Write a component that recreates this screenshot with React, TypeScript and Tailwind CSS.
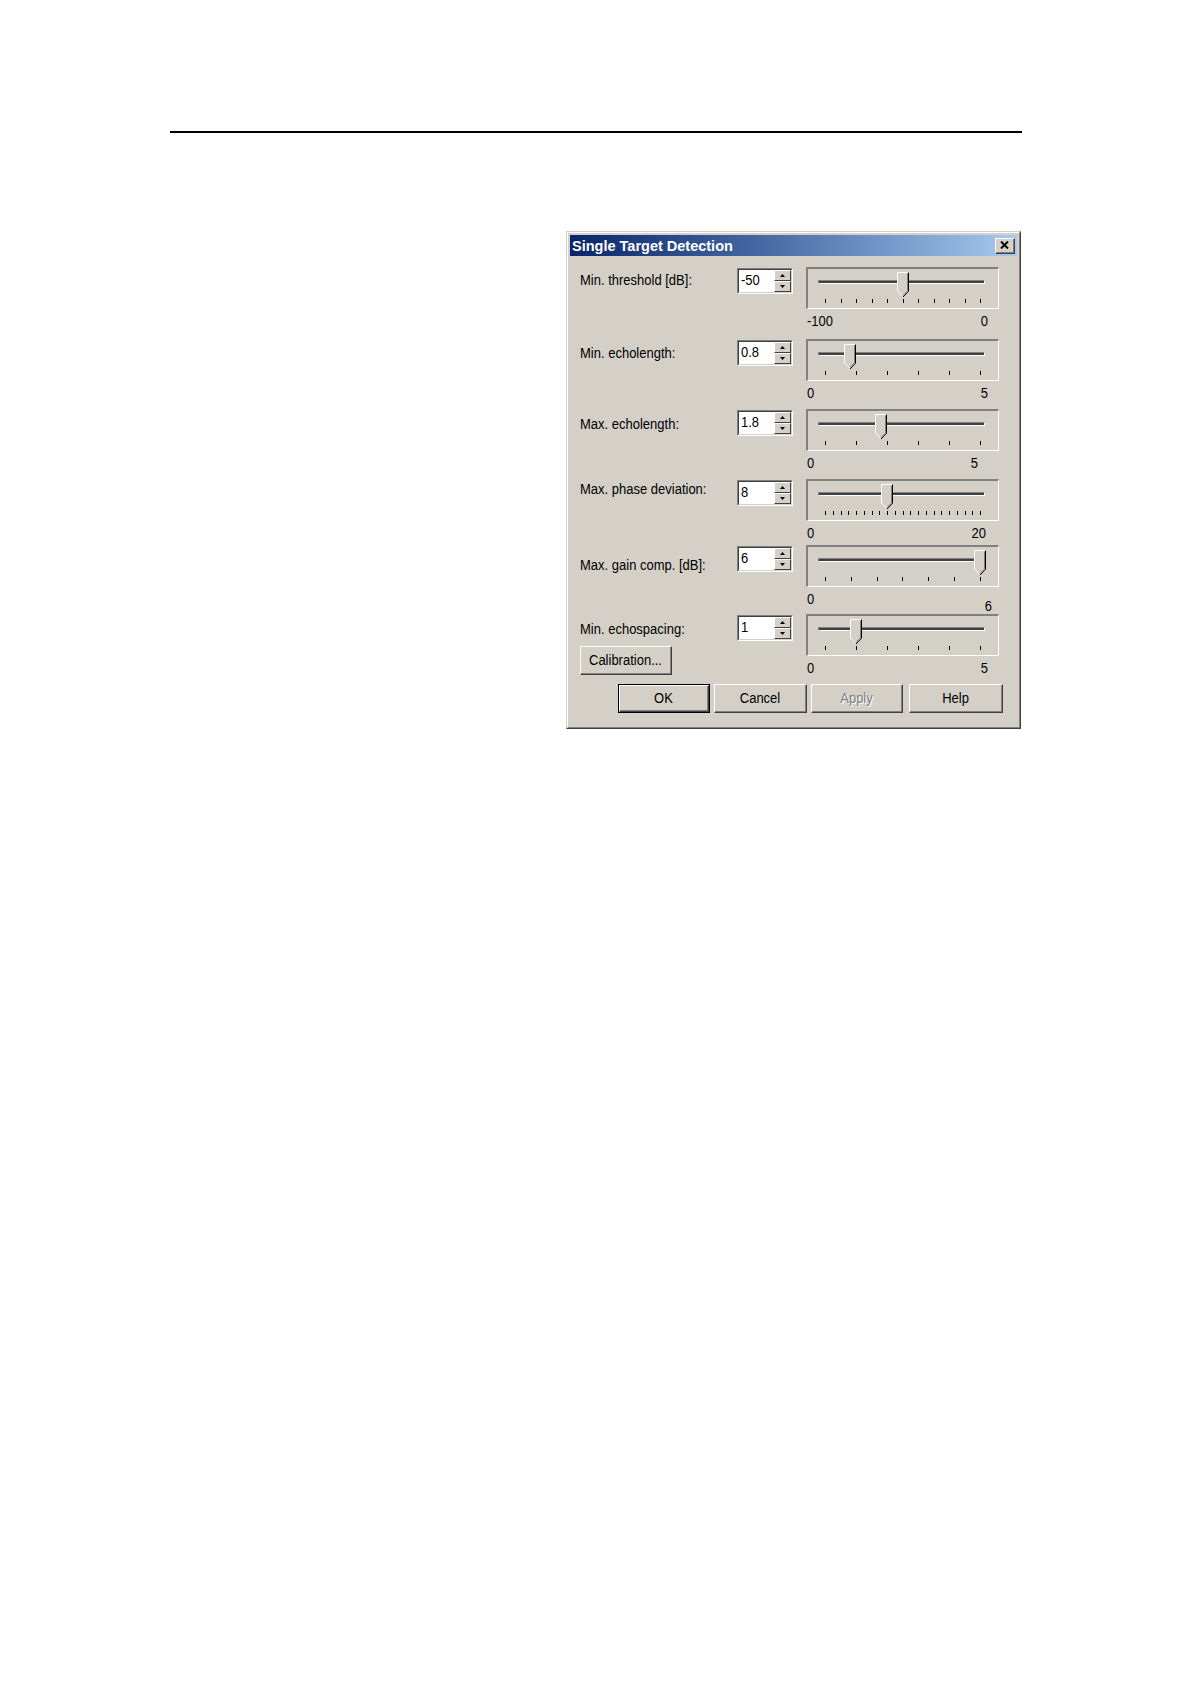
import React from "react";

type Row = {
  label: string;
  value: string;
  min: number;
  max: number;
  v: number;
  ticks: number;
  minL: string;
  maxL: string;
  h: string;
  lp: string;
  rp: string;
  maxMt: string;
  calib?: boolean;
};

const rows: Row[] = [
  { label: "Min. threshold [dB]:", value: "-50", min: -100, max: 0, v: -50, ticks: 11, minL: "-100", maxL: "0", h: "h-[72px]", lp: "pt-[3px]", rp: "pr-[11px]", maxMt: "" },
  { label: "Min. echolength:", value: "0.8", min: 0, max: 5, v: 0.8, ticks: 6, minL: "0", maxL: "5", h: "h-[70px]", lp: "pt-[4px]", rp: "pr-[11px]", maxMt: "" },
  { label: "Max. echolength:", value: "1.8", min: 0, max: 5, v: 1.8, ticks: 6, minL: "0", maxL: "5", h: "h-[70px]", lp: "pt-[5px]", rp: "pr-[21px]", maxMt: "" },
  { label: "Max. phase deviation:", value: "8", min: 0, max: 20, v: 8, ticks: 21, minL: "0", maxL: "20", h: "h-[66px]", lp: "pt-[0px]", rp: "pr-[13px]", maxMt: "" },
  { label: "Max. gain comp. [dB]:", value: "6", min: 0, max: 6, v: 6, ticks: 7, minL: "0", maxL: "6", h: "h-[69px]", lp: "pt-[10px]", rp: "pr-[7px]", maxMt: "mt-[7px]" },
  { label: "Min. echospacing:", value: "1", min: 0, max: 5, v: 1, ticks: 6, minL: "0", maxL: "5", h: "h-[70px]", lp: "pt-[5px]", rp: "pr-[11px]", maxMt: "", calib: true },
];

function Tx({ children, className = "" }: { children: React.ReactNode; className?: string }) {
  return <span className={"inline-block scale-y-[1.18] leading-[14px] " + className}>{children}</span>;
}

function Thumb() {
  return (
    <svg width="13" height="26" viewBox="0 0 13 26">
      <polygon points="0,0 12,0 12,19 6,25 0,19" fill="#d4d0c8" />
      <polyline points="6,24.5 0.5,19 0.5,0.5 11.5,0.5" fill="none" stroke="#ffffff" strokeWidth="1" />
      <polyline points="11.5,0.5 11.5,19.2 6,25" fill="none" stroke="#000000" strokeWidth="1" />
      <polyline points="10.5,1.5 10.5,18.8 6,23.5" fill="none" stroke="#808080" strokeWidth="1" />
    </svg>
  );
}

function Slider({ r }: { r: Row }) {
  const frac = (r.v - r.min) / (r.max - r.min);
  const center = 17 + frac * 155;
  const ticks = Array.from({ length: r.ticks }, (_, i) => i);
  return (
    <div className="w-[193px] flex flex-col">
      <div className="relative h-[42px] border-t-2 border-l-2 border-b border-r border-t-[#808080] border-l-[#808080] border-b-white border-r-white">
        <div className="ml-[10px] mt-[11px] w-[167px] h-[4px] border border-t-[#808080] border-l-[#808080] border-b-white border-r-white bg-[#404040]"></div>
        <div className="ml-[17px] mt-[15px] w-[156px] h-[4px] flex justify-between">
          {ticks.map((i) => (
            <div key={i} className="w-px h-[4px] bg-black" />
          ))}
        </div>
        <div className="absolute top-[3px] leading-[0]" style={{ left: center - 6 }}>
          <Thumb />
        </div>
      </div>
      <div className={"mt-[5px] h-[14px] flex justify-between pl-[1px] " + r.rp}>
        <Tx>{r.minL}</Tx>
        <Tx className={r.maxMt}>{r.maxL}</Tx>
      </div>
    </div>
  );
}

function SpinBtn({ up }: { up?: boolean }) {
  return (
    <div className="h-[11px] bg-[#d4d0c8] border border-t-white border-l-white border-b-[#404040] border-r-[#404040] flex items-center justify-center">
      <svg width="5" height="3" viewBox="0 0 5 3">
        {up ? <polygon points="2.5,0 5,3 0,3" fill="#000" /> : <polygon points="0,0 5,0 2.5,3" fill="#000" />}
      </svg>
    </div>
  );
}

function Spin({ value }: { value: string }) {
  return (
    <div className="mt-[1px] w-[56px] h-[26px] border border-t-[#808080] border-l-[#808080] border-b-white border-r-white">
      <div className="h-full border border-t-[#404040] border-l-[#404040] border-b-[#d4d0c8] border-r-[#d4d0c8] bg-white flex">
        <div className="flex-1 pl-[2px] pb-[3px] flex items-center">
          <Tx>{value}</Tx>
        </div>
        <div className="w-[17px] flex flex-col">
          <SpinBtn up />
          <SpinBtn />
        </div>
      </div>
    </div>
  );
}

function Btn({ children, w, isDefault, disabled }: { children: React.ReactNode; w: string; isDefault?: boolean; disabled?: boolean }) {
  const inner = (
    <div className="h-full border border-t-white border-l-white border-b-[#404040] border-r-[#404040]">
      <div className="h-full border-b border-r border-b-[#808080] border-r-[#808080] flex items-center justify-center">
        {disabled ? (
          <Tx className="text-[#808080] [text-shadow:1px_1px_0_#ffffff]">{children}</Tx>
        ) : (
          <Tx>{children}</Tx>
        )}
      </div>
    </div>
  );
  return (
    <div className={"h-[29px] bg-[#d4d0c8] " + w + (isDefault ? " border border-black" : "")}>{inner}</div>
  );
}

export default function App() {
  return (
    <div className="w-[1191px] h-[1684px] bg-white flex flex-col font-['Liberation_Sans',Arial,sans-serif] text-[13px] text-black">
      <div className="ml-[170px] mt-[131px] w-[852px] h-[2px] bg-black" />
      <div className="ml-[566px] mt-[98px] w-[455px] border border-t-[#d4d0c8] border-l-[#d4d0c8] border-b-[#404040] border-r-[#404040] bg-[#d4d0c8]">
        <div className="border border-t-white border-l-white border-b-[#808080] border-r-[#808080] p-[2px]">
          {/* Title bar */}
          <div className="h-[21px] bg-linear-to-r from-[#0a246a] to-[#a6caf0] flex items-center justify-between pl-[2px] pr-[2px]">
            <span className="text-white font-bold text-[14.5px] leading-[16px]">Single Target Detection</span>
            <div className="w-[20px] h-[16px] bg-[#d4d0c8] border border-t-white border-l-white border-b-[#404040] border-r-[#404040]">
              <div className="h-full border-b border-r border-b-[#808080] border-r-[#808080] flex items-center justify-center">
                <svg width="9" height="8" viewBox="0 0 9 8">
                  <path d="M1 0.5 L8 7.5 M8 0.5 L1 7.5" stroke="#000" strokeWidth="2" />
                </svg>
              </div>
            </div>
          </div>
          {/* Content */}
          <div className="pl-[10px] pt-[11px] pb-[12px] flex flex-col">
            {rows.map((r) => (
              <div key={r.label} className={"flex " + r.h}>
                <div className="w-[226px] flex flex-col">
                  <div className="flex">
                    <div className={"w-[157px] " + r.lp}>
                      <Tx>{r.label}</Tx>
                    </div>
                    <Spin value={r.value} />
                  </div>
                  {r.calib && (
                    <div className="mt-[5px]">
                      <Btn w="w-[92px]">Calibration...</Btn>
                    </div>
                  )}
                </div>
                <Slider r={r} />
              </div>
            ))}
            <div className="ml-[38px] flex gap-[4px]">
              <Btn w="w-[92px]" isDefault>OK</Btn>
              <Btn w="w-[93px]">Cancel</Btn>
              <Btn w="w-[92px]" disabled>Apply</Btn>
              <div className="ml-[2px]">
                <Btn w="w-[94px]">Help</Btn>
              </div>
            </div>
          </div>
        </div>
      </div>
    </div>
  );
}
